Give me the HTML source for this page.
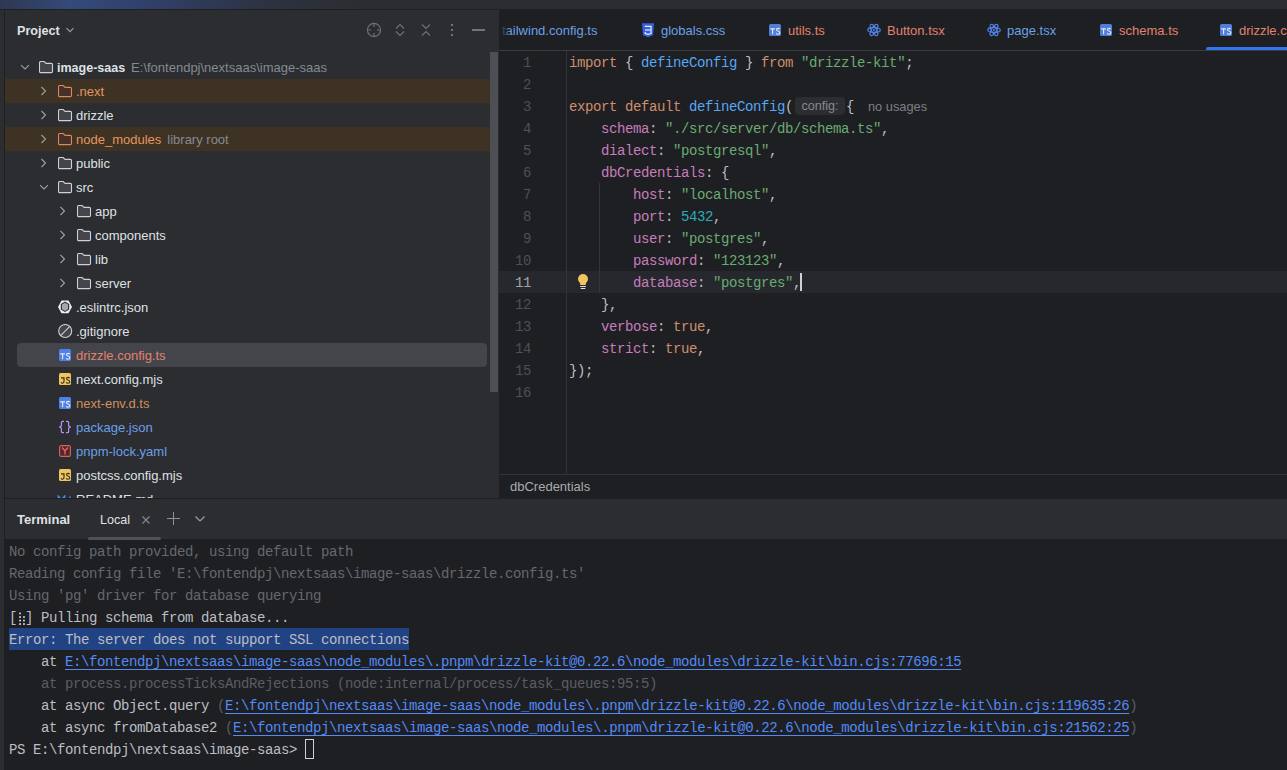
<!DOCTYPE html><html><head><meta charset="utf-8"><style>
*{margin:0;padding:0;box-sizing:border-box}
html,body{width:1287px;height:770px;overflow:hidden;background:#2b2d30;font-family:"Liberation Sans",sans-serif;font-size:13px;color:#dfe1e5}
.abs{position:absolute}
svg{position:absolute;display:block}
.mono{font-family:"Liberation Mono",monospace;font-size:14px;letter-spacing:-0.4px;white-space:pre}
.k{color:#cf8e6d}.f{color:#56a8f5}.s{color:#6aab73}.p{color:#c77dbb}.n{color:#2aacb8}
.ln{position:absolute;left:500px;width:31px;height:22px;line-height:22px;text-align:right;color:#4b5059}
.cl{position:absolute;left:569px;height:22px;line-height:22px;color:#bcbec4}
.tl{position:absolute;left:9px;height:22px;line-height:22px;color:#bcbec4}
.lnk{color:#548af7;text-decoration:underline;text-underline-offset:3px}
.tx{position:absolute;height:24px;line-height:24px;white-space:pre}
</style></head><body>
<div class="abs" style="left:0;top:0;width:1287px;height:9px;background:linear-gradient(90deg,#2e3850 0px,#344a7a 70px,#30406a 150px,#2d3343 260px,#2b2d30 360px,#2b2d30 100%)"></div>
<div class="abs" style="left:0;top:9px;width:1287px;height:1px;background:#1e1f22"></div>
<div class="abs" style="left:4px;top:10px;width:1px;height:760px;background:#1e1f22"></div>
<div class="abs" style="left:499px;top:10px;width:788px;height:488px;background:#1e1f22"></div>
<div class="abs" style="left:5px;top:498px;width:1282px;height:1px;background:#1e1f22"></div>
<div class="abs" style="left:5px;top:539px;width:1282px;height:231px;background:#1e1f22"></div>
<div class="tx" style="left:17px;top:19px;font-weight:bold;font-size:12.6px;color:#dfe1e5">Project</div>
<svg style="left:65px;top:27px" width="10" height="6" viewBox="0 0 10 6"><path d="M1.5 1.2L5 4.7L8.5 1.2" fill="none" stroke="#9da0a8" stroke-width="1.1"/></svg>
<svg style="left:366px;top:22px" width="16" height="16" viewBox="0 0 16 16"><circle cx="8" cy="8" r="6.6" fill="none" stroke="#6f737a" stroke-width="1.1"/><path d="M8 1.8V5M8 11V14.2M1.8 8H5M11 8H14.2" stroke="#6f737a" stroke-width="1.1"/></svg>
<svg style="left:394px;top:22px" width="12" height="16" viewBox="0 0 12 16"><path d="M2 6.5L6 2.5L10 6.5M2 9.5L6 13.5L10 9.5" fill="none" stroke="#6f737a" stroke-width="1.1"/></svg>
<svg style="left:420px;top:22px" width="12" height="16" viewBox="0 0 12 16"><path d="M2 2.5L6 6.5L10 2.5M2 13.5L6 9.5L10 13.5" fill="none" stroke="#6f737a" stroke-width="1.1"/></svg>
<svg style="left:450px;top:22px" width="4" height="16" viewBox="0 0 4 16"><rect x="1" y="2" width="2" height="2" fill="#6f737a"/><rect x="1" y="7" width="2" height="2" fill="#6f737a"/><rect x="1" y="12" width="2" height="2" fill="#6f737a"/></svg>
<div class="abs" style="left:472px;top:29px;width:13px;height:2px;background:#6f737a"></div>
<div class="abs" style="left:490px;top:52px;width:8px;height:340px;background:#4d4f54"></div>
<div class="abs" style="left:5px;top:50px;width:485px;height:448px;overflow:hidden">
<svg style="left:15px;top:14px" width="10" height="7" viewBox="0 0 10 7"><path d="M1 1.2L5 5L9 1.2" fill="none" stroke="#9da0a8" stroke-width="1.1"/></svg>
<svg style="left:34px;top:11px" width="16" height="14" viewBox="0 0 16 14"><path d="M0.5 1.7a1.2 1.2 0 0 1 1.2-1.2h3.5l1.9 1.9h5.2a1.2 1.2 0 0 1 1.2 1.2v6.8a1.2 1.2 0 0 1-1.2 1.2h-10.6a1.2 1.2 0 0 1-1.2-1.2z" fill="#43454a" stroke="#ced0d6" stroke-width="1.1"/></svg>
<div class="tx" style="left:52px;top:6px;color:#dfe1e5;font-weight:bold;font-size:12.5px;">image-saas<span style="color:#868a91;font-weight:normal;font-size:13px;margin-left:6px">E:\fontendpj\nextsaas\image-saas</span></div>
<div class="abs" style="left:0;top:29px;width:485px;height:24px;background:#3d3223"></div>
<svg style="left:34.5px;top:36px" width="8" height="10" viewBox="0 0 8 10"><path d="M1.5 1L5.5 5L1.5 9" fill="none" stroke="#9da0a8" stroke-width="1.1"/></svg>
<svg style="left:53px;top:35px" width="16" height="14" viewBox="0 0 16 14"><path d="M0.5 1.7a1.2 1.2 0 0 1 1.2-1.2h3.5l1.9 1.9h5.2a1.2 1.2 0 0 1 1.2 1.2v6.8a1.2 1.2 0 0 1-1.2 1.2h-10.6a1.2 1.2 0 0 1-1.2-1.2z" fill="#45302a" stroke="#e08855" stroke-width="1.1"/></svg>
<div class="tx" style="left:71px;top:30px;color:#e3955f;">.next</div>
<svg style="left:34.5px;top:60px" width="8" height="10" viewBox="0 0 8 10"><path d="M1.5 1L5.5 5L1.5 9" fill="none" stroke="#9da0a8" stroke-width="1.1"/></svg>
<svg style="left:53px;top:59px" width="16" height="14" viewBox="0 0 16 14"><path d="M0.5 1.7a1.2 1.2 0 0 1 1.2-1.2h3.5l1.9 1.9h5.2a1.2 1.2 0 0 1 1.2 1.2v6.8a1.2 1.2 0 0 1-1.2 1.2h-10.6a1.2 1.2 0 0 1-1.2-1.2z" fill="#43454a" stroke="#ced0d6" stroke-width="1.1"/></svg>
<div class="tx" style="left:71px;top:54px;color:#dfe1e5;">drizzle</div>
<div class="abs" style="left:0;top:77px;width:485px;height:24px;background:#3d3223"></div>
<svg style="left:34.5px;top:84px" width="8" height="10" viewBox="0 0 8 10"><path d="M1.5 1L5.5 5L1.5 9" fill="none" stroke="#9da0a8" stroke-width="1.1"/></svg>
<svg style="left:53px;top:83px" width="16" height="14" viewBox="0 0 16 14"><path d="M0.5 1.7a1.2 1.2 0 0 1 1.2-1.2h3.5l1.9 1.9h5.2a1.2 1.2 0 0 1 1.2 1.2v6.8a1.2 1.2 0 0 1-1.2 1.2h-10.6a1.2 1.2 0 0 1-1.2-1.2z" fill="#45302a" stroke="#e08855" stroke-width="1.1"/></svg>
<div class="tx" style="left:71px;top:78px;color:#e3955f;">node_modules<span style="color:#868a91;margin-left:6px">library root</span></div>
<svg style="left:34.5px;top:108px" width="8" height="10" viewBox="0 0 8 10"><path d="M1.5 1L5.5 5L1.5 9" fill="none" stroke="#9da0a8" stroke-width="1.1"/></svg>
<svg style="left:53px;top:107px" width="16" height="14" viewBox="0 0 16 14"><path d="M0.5 1.7a1.2 1.2 0 0 1 1.2-1.2h3.5l1.9 1.9h5.2a1.2 1.2 0 0 1 1.2 1.2v6.8a1.2 1.2 0 0 1-1.2 1.2h-10.6a1.2 1.2 0 0 1-1.2-1.2z" fill="#43454a" stroke="#ced0d6" stroke-width="1.1"/></svg>
<div class="tx" style="left:71px;top:102px;color:#dfe1e5;">public</div>
<svg style="left:34px;top:134px" width="10" height="7" viewBox="0 0 10 7"><path d="M1 1.2L5 5L9 1.2" fill="none" stroke="#9da0a8" stroke-width="1.1"/></svg>
<svg style="left:53px;top:131px" width="16" height="14" viewBox="0 0 16 14"><path d="M0.5 1.7a1.2 1.2 0 0 1 1.2-1.2h3.5l1.9 1.9h5.2a1.2 1.2 0 0 1 1.2 1.2v6.8a1.2 1.2 0 0 1-1.2 1.2h-10.6a1.2 1.2 0 0 1-1.2-1.2z" fill="#43454a" stroke="#ced0d6" stroke-width="1.1"/></svg>
<div class="tx" style="left:71px;top:126px;color:#dfe1e5;">src</div>
<svg style="left:53.5px;top:156px" width="8" height="10" viewBox="0 0 8 10"><path d="M1.5 1L5.5 5L1.5 9" fill="none" stroke="#9da0a8" stroke-width="1.1"/></svg>
<svg style="left:72px;top:155px" width="16" height="14" viewBox="0 0 16 14"><path d="M0.5 1.7a1.2 1.2 0 0 1 1.2-1.2h3.5l1.9 1.9h5.2a1.2 1.2 0 0 1 1.2 1.2v6.8a1.2 1.2 0 0 1-1.2 1.2h-10.6a1.2 1.2 0 0 1-1.2-1.2z" fill="#43454a" stroke="#ced0d6" stroke-width="1.1"/></svg>
<div class="tx" style="left:90px;top:150px;color:#dfe1e5;">app</div>
<svg style="left:53.5px;top:180px" width="8" height="10" viewBox="0 0 8 10"><path d="M1.5 1L5.5 5L1.5 9" fill="none" stroke="#9da0a8" stroke-width="1.1"/></svg>
<svg style="left:72px;top:179px" width="16" height="14" viewBox="0 0 16 14"><path d="M0.5 1.7a1.2 1.2 0 0 1 1.2-1.2h3.5l1.9 1.9h5.2a1.2 1.2 0 0 1 1.2 1.2v6.8a1.2 1.2 0 0 1-1.2 1.2h-10.6a1.2 1.2 0 0 1-1.2-1.2z" fill="#43454a" stroke="#ced0d6" stroke-width="1.1"/></svg>
<div class="tx" style="left:90px;top:174px;color:#dfe1e5;">components</div>
<svg style="left:53.5px;top:204px" width="8" height="10" viewBox="0 0 8 10"><path d="M1.5 1L5.5 5L1.5 9" fill="none" stroke="#9da0a8" stroke-width="1.1"/></svg>
<svg style="left:72px;top:203px" width="16" height="14" viewBox="0 0 16 14"><path d="M0.5 1.7a1.2 1.2 0 0 1 1.2-1.2h3.5l1.9 1.9h5.2a1.2 1.2 0 0 1 1.2 1.2v6.8a1.2 1.2 0 0 1-1.2 1.2h-10.6a1.2 1.2 0 0 1-1.2-1.2z" fill="#43454a" stroke="#ced0d6" stroke-width="1.1"/></svg>
<div class="tx" style="left:90px;top:198px;color:#dfe1e5;">lib</div>
<svg style="left:53.5px;top:228px" width="8" height="10" viewBox="0 0 8 10"><path d="M1.5 1L5.5 5L1.5 9" fill="none" stroke="#9da0a8" stroke-width="1.1"/></svg>
<svg style="left:72px;top:227px" width="16" height="14" viewBox="0 0 16 14"><path d="M0.5 1.7a1.2 1.2 0 0 1 1.2-1.2h3.5l1.9 1.9h5.2a1.2 1.2 0 0 1 1.2 1.2v6.8a1.2 1.2 0 0 1-1.2 1.2h-10.6a1.2 1.2 0 0 1-1.2-1.2z" fill="#43454a" stroke="#ced0d6" stroke-width="1.1"/></svg>
<div class="tx" style="left:90px;top:222px;color:#dfe1e5;">server</div>
<svg style="left:53px;top:250px" width="15" height="14" viewBox="0 0 15 14"><path d="M0 7L3.5 0.6H10.5L14 7L10.5 13.2H3.5Z" fill="#eef0f3"/><path d="M7 1.6L11.2 4.1V9.6L7 12.1L2.8 9.6V4.1Z" fill="#2b2d30"/><path d="M7 2.7L10.1 4.6V9.1L7 11L3.9 9.1V4.6Z" fill="#a3a7b0"/></svg>
<div class="tx" style="left:71px;top:246px;color:#dfe1e5;">.eslintrc.json</div>
<svg style="left:53px;top:274px" width="15" height="15" viewBox="0 0 15 15"><circle cx="7.2" cy="7" r="6.5" fill="#43454a" stroke="#ced0d6" stroke-width="1.1"/><path d="M2.4 11.8L12 2.2" stroke="#ced0d6" stroke-width="1.1"/></svg>
<div class="tx" style="left:71px;top:270px;color:#dfe1e5;">.gitignore</div>
<div class="abs" style="left:12px;top:293px;width:470px;height:24px;background:#43454a;border-radius:4px"></div>
<svg style="left:54px;top:299px" width="12" height="12" viewBox="0 0 12 12"><rect width="12" height="12" rx="1.6" fill="#4f82e8"/><path d="M1.3 4.9H5.9M3.6 4.9V10.3" stroke="#e8ebf0" stroke-width="1.1"/><path d="M10.6 5.3C10.3 4.7 9.8 4.4 9.1 4.4C8.2 4.4 7.5 4.9 7.5 5.7C7.5 7.4 10.8 6.8 10.8 8.7C10.8 9.6 10.1 10.2 9.1 10.2C8.3 10.2 7.6 9.9 7.2 9.2" fill="none" stroke="#e8ebf0" stroke-width="1.1"/></svg>
<div class="tx" style="left:71px;top:294px;color:#e3826f;">drizzle.config.ts</div>
<svg style="left:54px;top:323px" width="12" height="12" viewBox="0 0 12 12"><rect width="12" height="12" rx="1.6" fill="#f2c55c"/><path d="M2 4.9H5V8.6C5 9.7 4.4 10.2 3.5 10.2C2.8 10.2 2.3 9.9 2 9.3" fill="none" stroke="#2b2d30" stroke-width="1.1"/><path d="M10.6 5.3C10.3 4.7 9.8 4.4 9.1 4.4C8.2 4.4 7.5 4.9 7.5 5.7C7.5 7.4 10.8 6.8 10.8 8.7C10.8 9.6 10.1 10.2 9.1 10.2C8.3 10.2 7.6 9.9 7.2 9.2" fill="none" stroke="#2b2d30" stroke-width="1.1"/></svg>
<div class="tx" style="left:71px;top:318px;color:#dfe1e5;">next.config.mjs</div>
<svg style="left:54px;top:347px" width="12" height="12" viewBox="0 0 12 12"><rect width="12" height="12" rx="1.6" fill="#4f82e8"/><path d="M1.3 4.9H5.9M3.6 4.9V10.3" stroke="#e8ebf0" stroke-width="1.1"/><path d="M10.6 5.3C10.3 4.7 9.8 4.4 9.1 4.4C8.2 4.4 7.5 4.9 7.5 5.7C7.5 7.4 10.8 6.8 10.8 8.7C10.8 9.6 10.1 10.2 9.1 10.2C8.3 10.2 7.6 9.9 7.2 9.2" fill="none" stroke="#e8ebf0" stroke-width="1.1"/></svg>
<div class="tx" style="left:71px;top:342px;color:#d0905c;">next-env.d.ts</div>
<svg style="left:53px;top:370px" width="15" height="14" viewBox="0 0 15 14"><path d="M6 1.3H4.7C3.9 1.3 3.4 1.8 3.4 2.6V5.3C3.4 6.2 2.7 7 1.1 7C2.7 7 3.4 7.8 3.4 8.7V11.4C3.4 12.2 3.9 12.7 4.7 12.7H6M8 1.3H9.3C10.1 1.3 10.6 1.8 10.6 2.6V5.3C10.6 6.2 11.3 7 12.9 7C11.3 7 10.6 7.8 10.6 8.7V11.4C10.6 12.2 10.1 12.7 9.3 12.7H8" fill="none" stroke="#b48ef5" stroke-width="1.25"/></svg>
<div class="tx" style="left:71px;top:366px;color:#6c9fe8;">package.json</div>
<svg style="left:54px;top:395px" width="12" height="12" viewBox="0 0 12 12"><rect x="0.6" y="0.6" width="10.8" height="10.8" rx="1.5" fill="#4a2a2c" stroke="#e55c5c" stroke-width="1.1"/><path d="M3 2.6L6 5.8L9 2.6M6 5.8V9.6" fill="none" stroke="#e55c5c" stroke-width="1.5"/></svg>
<div class="tx" style="left:71px;top:390px;color:#6c9fe8;">pnpm-lock.yaml</div>
<svg style="left:54px;top:419px" width="12" height="12" viewBox="0 0 12 12"><rect width="12" height="12" rx="1.6" fill="#f2c55c"/><path d="M2 4.9H5V8.6C5 9.7 4.4 10.2 3.5 10.2C2.8 10.2 2.3 9.9 2 9.3" fill="none" stroke="#2b2d30" stroke-width="1.1"/><path d="M10.6 5.3C10.3 4.7 9.8 4.4 9.1 4.4C8.2 4.4 7.5 4.9 7.5 5.7C7.5 7.4 10.8 6.8 10.8 8.7C10.8 9.6 10.1 10.2 9.1 10.2C8.3 10.2 7.6 9.9 7.2 9.2" fill="none" stroke="#2b2d30" stroke-width="1.1"/></svg>
<div class="tx" style="left:71px;top:414px;color:#dfe1e5;">postcss.config.mjs</div>
<svg style="left:52px;top:445px" width="16" height="10" viewBox="0 0 16 10"><path d="M1.5 10V1.5L4.5 5L7.5 1.5V10" fill="none" stroke="#548af7" stroke-width="1.6"/><path d="M13 1.5V9M10.5 6.5L13 9L15.5 6.5" fill="none" stroke="#548af7" stroke-width="1.4"/></svg>
<div class="tx" style="left:71px;top:438px;color:#dfe1e5;">README.md</div>
</div>
<div class="abs" style="left:499px;top:50px;width:788px;height:1px;background:#393b40"></div>
<div class="abs" style="left:499px;top:10px;width:788px;height:40px;overflow:hidden">
<div class="abs" style="left:3px;top:1px;height:40px;line-height:40px;white-space:pre;color:#6c9fe8">tailwind.config.ts</div>
<div class="abs" style="left:0;top:0;width:12px;height:40px;background:linear-gradient(90deg,#1e1f22 0%,rgba(30,31,34,0.6) 50%,rgba(30,31,34,0) 100%)"></div>
<svg style="left:143px;top:12.5px" width="12" height="15" viewBox="0 0 12 15"><path d="M0 0.3H12L11 12.3L6 14.3L1 12.3Z" fill="#3560e0"/><path d="M2.8 3.3H9V10.5L6 11.4L3.2 10.5V9" fill="none" stroke="#e8ecf5" stroke-width="1.2"/><path d="M3 7H8.6" stroke="#e8ecf5" stroke-width="1.2"/></svg>
<div class="abs" style="left:162px;top:1px;height:40px;line-height:40px;white-space:pre;color:#6c9fe8">globals.css</div>
<svg style="left:270px;top:14px" width="12" height="12" viewBox="0 0 12 12"><rect width="12" height="12" rx="1.6" fill="#4f7fd9"/><path d="M1.3 4.9H5.9M3.6 4.9V10.3" stroke="#e8ebf0" stroke-width="1.1"/><path d="M10.6 5.3C10.3 4.7 9.8 4.4 9.1 4.4C8.2 4.4 7.5 4.9 7.5 5.7C7.5 7.4 10.8 6.8 10.8 8.7C10.8 9.6 10.1 10.2 9.1 10.2C8.3 10.2 7.6 9.9 7.2 9.2" fill="none" stroke="#e8ebf0" stroke-width="1.1"/></svg>
<div class="abs" style="left:289px;top:1px;height:40px;line-height:40px;white-space:pre;color:#e3826f">utils.ts</div>
<svg style="left:367.5px;top:13px" width="14" height="14" viewBox="0 0 14 14"><g fill="none" stroke="#4f7fe0" stroke-width="1.3"><ellipse cx="7" cy="7" rx="6.3" ry="2.5"/><ellipse cx="7" cy="7" rx="6.3" ry="2.5" transform="rotate(60 7 7)"/><ellipse cx="7" cy="7" rx="6.3" ry="2.5" transform="rotate(-60 7 7)"/></g><circle cx="7" cy="7" r="1.1" fill="#4f7fe0"/></svg>
<div class="abs" style="left:388px;top:1px;height:40px;line-height:40px;white-space:pre;color:#e3826f">Button.tsx</div>
<svg style="left:487.5px;top:13px" width="14" height="14" viewBox="0 0 14 14"><g fill="none" stroke="#4f7fe0" stroke-width="1.3"><ellipse cx="7" cy="7" rx="6.3" ry="2.5"/><ellipse cx="7" cy="7" rx="6.3" ry="2.5" transform="rotate(60 7 7)"/><ellipse cx="7" cy="7" rx="6.3" ry="2.5" transform="rotate(-60 7 7)"/></g><circle cx="7" cy="7" r="1.1" fill="#4f7fe0"/></svg>
<div class="abs" style="left:508px;top:1px;height:40px;line-height:40px;white-space:pre;color:#6c9fe8">page.tsx</div>
<svg style="left:601px;top:14px" width="12" height="12" viewBox="0 0 12 12"><rect width="12" height="12" rx="1.6" fill="#4f7fd9"/><path d="M1.3 4.9H5.9M3.6 4.9V10.3" stroke="#e8ebf0" stroke-width="1.1"/><path d="M10.6 5.3C10.3 4.7 9.8 4.4 9.1 4.4C8.2 4.4 7.5 4.9 7.5 5.7C7.5 7.4 10.8 6.8 10.8 8.7C10.8 9.6 10.1 10.2 9.1 10.2C8.3 10.2 7.6 9.9 7.2 9.2" fill="none" stroke="#e8ebf0" stroke-width="1.1"/></svg>
<div class="abs" style="left:620px;top:1px;height:40px;line-height:40px;white-space:pre;color:#e3826f">schema.ts</div>
<svg style="left:721px;top:14px" width="12" height="12" viewBox="0 0 12 12"><rect width="12" height="12" rx="1.6" fill="#4f7fd9"/><path d="M1.3 4.9H5.9M3.6 4.9V10.3" stroke="#e8ebf0" stroke-width="1.1"/><path d="M10.6 5.3C10.3 4.7 9.8 4.4 9.1 4.4C8.2 4.4 7.5 4.9 7.5 5.7C7.5 7.4 10.8 6.8 10.8 8.7C10.8 9.6 10.1 10.2 9.1 10.2C8.3 10.2 7.6 9.9 7.2 9.2" fill="none" stroke="#e8ebf0" stroke-width="1.1"/></svg>
<div class="abs" style="left:740px;top:1px;height:40px;line-height:40px;white-space:pre;color:#e3826f">drizzle.config.ts</div>
<div class="abs" style="left:707px;top:37px;width:90px;height:4px;background:#3574f0;border-radius:2px 0 0 2px"></div>
</div>
<div class="abs" style="left:499px;top:271px;width:788px;height:22px;background:#26282e"></div>
<div class="abs" style="left:566px;top:51px;width:1px;height:423px;background:#313438"></div>
<div class="abs" style="left:599px;top:183px;width:1px;height:110px;background:#313438"></div>
<div class="ln mono" style="top:52px;color:#4b5059">1</div>
<div class="cl mono" style="top:52px"><span class="k">import</span> { <span class="f">defineConfig</span> } <span class="k">from</span> <span class="s">"drizzle-kit"</span>;</div>
<div class="ln mono" style="top:74px;color:#4b5059">2</div>
<div class="ln mono" style="top:96px;color:#4b5059">3</div>
<div class="cl mono" style="top:96px"><span class="k">export default</span> <span class="f">defineConfig</span>(</div>
<div class="ln mono" style="top:118px;color:#4b5059">4</div>
<div class="cl mono" style="top:118px">    <span class="p">schema</span>: <span class="s">"./src/server/db/schema.ts"</span>,</div>
<div class="ln mono" style="top:140px;color:#4b5059">5</div>
<div class="cl mono" style="top:140px">    <span class="p">dialect</span>: <span class="s">"postgresql"</span>,</div>
<div class="ln mono" style="top:162px;color:#4b5059">6</div>
<div class="cl mono" style="top:162px">    <span class="p">dbCredentials</span>: {</div>
<div class="ln mono" style="top:184px;color:#4b5059">7</div>
<div class="cl mono" style="top:184px">        <span class="p">host</span>: <span class="s">"localhost"</span>,</div>
<div class="ln mono" style="top:206px;color:#4b5059">8</div>
<div class="cl mono" style="top:206px">        <span class="p">port</span>: <span class="n">5432</span>,</div>
<div class="ln mono" style="top:228px;color:#4b5059">9</div>
<div class="cl mono" style="top:228px">        <span class="p">user</span>: <span class="s">"postgres"</span>,</div>
<div class="ln mono" style="top:250px;color:#4b5059">10</div>
<div class="cl mono" style="top:250px">        <span class="p">password</span>: <span class="s">"123123"</span>,</div>
<div class="ln mono" style="top:272px;color:#a1a3ab">11</div>
<div class="cl mono" style="top:272px">        <span class="p">database</span>: <span class="s">"postgres"</span>,</div>
<div class="ln mono" style="top:294px;color:#4b5059">12</div>
<div class="cl mono" style="top:294px">    },</div>
<div class="ln mono" style="top:316px;color:#4b5059">13</div>
<div class="cl mono" style="top:316px">    <span class="p">verbose</span>: <span class="k">true</span>,</div>
<div class="ln mono" style="top:338px;color:#4b5059">14</div>
<div class="cl mono" style="top:338px">    <span class="p">strict</span>: <span class="k">true</span>,</div>
<div class="ln mono" style="top:360px;color:#4b5059">15</div>
<div class="cl mono" style="top:360px">});</div>
<div class="ln mono" style="top:382px;color:#4b5059">16</div>
<div class="abs" style="left:795px;top:97px;width:50px;height:18px;background:#2b2d30;border-radius:4px;color:#868a91;font-size:12.6px;line-height:19px;text-align:center">config:</div>
<div class="abs mono" style="left:846px;top:96px;height:22px;line-height:22px;color:#bcbec4">{</div>
<div class="abs" style="left:868px;top:96px;height:22px;line-height:22px;color:#7c7f86;font-size:12.8px">no usages</div>
<svg style="left:577px;top:273px" width="12" height="17" viewBox="0 0 12 17"><path d="M6 1A5 5 0 0 1 11 6C11 8 9.5 9.3 8.8 10.5V12H3.2V10.5C2.5 9.3 1 8 1 6A5 5 0 0 1 6 1Z" fill="#f2c55c"/><rect x="3.2" y="13" width="5.6" height="1" fill="#dfe1e5"/><rect x="3.7" y="15" width="4.6" height="1" fill="#dfe1e5"/></svg>
<div class="abs" style="left:800px;top:273px;width:2px;height:18px;background:#ced0d6"></div>
<div class="abs" style="left:500px;top:474px;width:787px;height:1px;background:#313438"></div>
<div class="tx" style="left:510px;top:475px;height:22px;line-height:23px;color:#a8abb0">dbCredentials</div>
<div class="tx" style="left:17px;top:508px;font-weight:bold;color:#dfe1e5">Terminal</div>
<div class="tx" style="left:100px;top:508px;color:#dfe1e5;font-size:12.6px">Local</div>
<svg style="left:140px;top:514px" width="12" height="12" viewBox="0 0 12 12"><path d="M2.5 2.5L9.5 9.5M9.5 2.5L2.5 9.5" stroke="#868a91" stroke-width="1.1"/></svg>
<svg style="left:166px;top:511px" width="15" height="15" viewBox="0 0 15 15"><path d="M7.5 1V14M1 7.5H14" stroke="#8e9198" stroke-width="1"/></svg>
<svg style="left:194px;top:514px" width="12" height="10" viewBox="0 0 12 10"><path d="M1.5 2.5L6 7L10.5 2.5" fill="none" stroke="#9da0a8" stroke-width="1.2"/></svg>
<div class="abs" style="left:88px;top:537px;width:73px;height:3px;background:#4e5157;border-radius:2px"></div>
<div class="abs" style="left:9px;top:628px;width:400px;height:22px;background:#214283"></div>
<div class="tl mono" style="top:541px"><span style="color:#65686e">No config path provided, using default path</span></div>
<div class="tl mono" style="top:563px"><span style="color:#65686e">Reading config file 'E:\fontendpj\nextsaas\image-saas\drizzle.config.ts'</span></div>
<div class="tl mono" style="top:585px"><span style="color:#65686e">Using 'pg' driver for database querying</span></div>
<div class="tl mono" style="top:607px">[ ] Pulling schema from database...</div>
<div class="tl mono" style="top:629px">Error: The server does not support SSL connections</div>
<div class="tl mono" style="top:651px">    at <span class="lnk">E:\fontendpj\nextsaas\image-saas\node_modules\.pnpm\drizzle-kit@0.22.6\node_modules\drizzle-kit\bin.cjs:77696:15</span></div>
<div class="tl mono" style="top:673px"><span style="color:#5a5d62">    at process.processTicksAndRejections (node:internal/process/task_queues:95:5)</span></div>
<div class="tl mono" style="top:695px">    at async Object.query <span style="color:#5a5d62">(</span><span class="lnk">E:\fontendpj\nextsaas\image-saas\node_modules\.pnpm\drizzle-kit@0.22.6\node_modules\drizzle-kit\bin.cjs:119635:26</span><span style="color:#5a5d62">)</span></div>
<div class="tl mono" style="top:717px">    at async fromDatabase2 <span style="color:#5a5d62">(</span><span class="lnk">E:\fontendpj\nextsaas\image-saas\node_modules\.pnpm\drizzle-kit@0.22.6\node_modules\drizzle-kit\bin.cjs:21562:25</span><span style="color:#5a5d62">)</span></div>
<div class="tl mono" style="top:739px">PS E:\fontendpj\nextsaas\image-saas&gt; </div>
<svg style="left:17px;top:606px" width="8" height="22" viewBox="0 0 8 22"><g fill="#dfe1e5"><rect x="2.2" y="6.6" width="1.7" height="1.7"/><rect x="2.2" y="10.2" width="1.7" height="1.7"/><rect x="6.1" y="10.2" width="1.7" height="1.7"/><rect x="2.2" y="13.7" width="1.7" height="1.7"/><rect x="6.1" y="13.7" width="1.7" height="1.7"/><rect x="2.2" y="17.2" width="1.7" height="1.7"/><rect x="6.1" y="17.2" width="1.7" height="1.7"/></g></svg>
<div class="abs" style="left:305px;top:739px;width:9px;height:20px;border:1.5px solid #ced0d6"></div>
</body></html>
